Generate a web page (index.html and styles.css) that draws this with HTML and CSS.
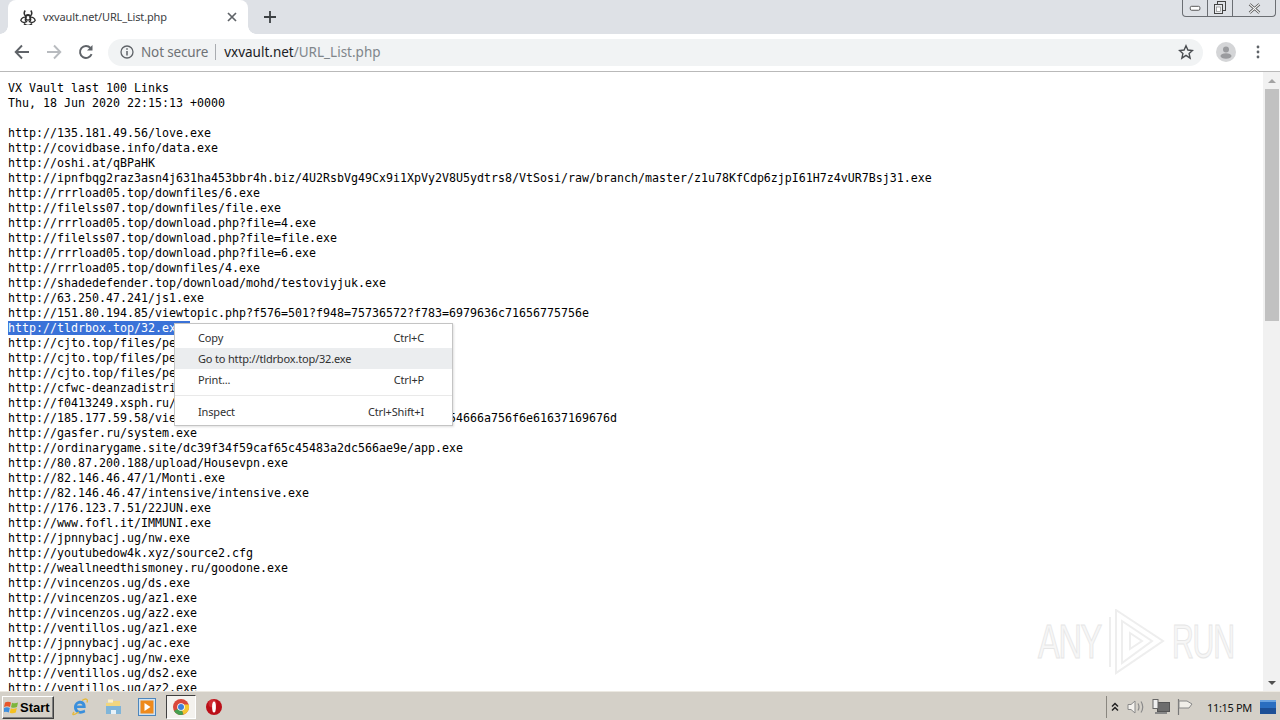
FILE: index.html
```html
<!DOCTYPE html>
<html lang="en">
<head>
<meta charset="utf-8">
<title>vxvault.net/URL_List.php</title>
<link rel="stylesheet" href="styles.css">
</head>
<body>
<div class="desktop">
  <header class="tabstrip">
    <div class="tab">
      <svg class="favicon" viewBox="0 0 16 16" width="16" height="16"><g fill="none" stroke="#2f2f2f"><circle cx="8" cy="8.800" r="2.400" stroke-width="1.300"/><path d="M5.200 1.500a4.200 4.200 0 0 0 .4 5.500 3.400 3.400 0 0 1 4.800 0 4.200 4.200 0 0 0 .4-5.500" stroke-width="1.500"/><path d="M.8 11.500a4.200 4.200 0 0 1 5.200-3.200 3.400 3.400 0 0 0 .6 4.500 4.200 4.200 0 0 1-5.800-1.300z" stroke-width="1.300"/><path d="M15.200 11.500a4.200 4.200 0 0 0-5.200-3.200 3.400 3.400 0 0 1-.6 4.500 4.200 4.200 0 0 0 5.800-1.300z" stroke-width="1.300"/><path d="M4 14.500a5 5 0 0 0 8 0" stroke-width="1.500"/></g></svg>
      <span class="tab-title">vxvault.net/URL_List.php</span>
      <svg class="tab-close" viewBox="0 0 10 10" width="10" height="10"><path d="M1 1l8 8M9 1l-8 8" stroke="#5f6368" stroke-width="1.700"/></svg>
    </div>
    <svg class="newtab" viewBox="0 0 12 12" width="12" height="12"><path d="M6 0v12M0 6h12" stroke="#3c4043" stroke-width="1.800"/></svg>
    <div class="winctrl">
      <span class="winbtn"><svg viewBox="0 0 14 8" width="13" height="7"><rect x="1" y="1.500" width="11" height="4.500" rx="1.500" fill="#fff" stroke="#444"/></svg></span>
      <span class="winbtn"><svg viewBox="0 0 14 14" width="14" height="14"><rect x="4.500" y=".5" width="8" height="9" fill="none" stroke="#444"/><rect x="1.500" y="3.500" width="8" height="9" fill="#e8eaed" stroke="#444"/><rect x="3.500" y="6" width="4" height="4.500" fill="#fff" stroke="#777" stroke-width=".6"/></svg></span>
      <span class="winbtn wide"><svg viewBox="0 0 12 10" width="13" height="11"><path d="M1.500 1l9 8M10.500 1l-9 8" stroke="#555" stroke-width="2.400"/><path d="M1.500 1l9 8M10.500 1l-9 8" stroke="#fff" stroke-width="1"/></svg></span>
    </div>
  </header>

  <nav class="toolbar">
    <svg class="navicon" viewBox="0 0 16 16" width="16" height="16"><path d="M15 8H2M8 1.500L1.700 8 8 14.500" fill="none" stroke="#5f6368" stroke-width="1.900"/></svg>
    <svg class="navicon" viewBox="0 0 16 16" width="16" height="16"><path d="M1 8h13M8 1.500L14.300 8 8 14.500" fill="none" stroke="#b8bbbf" stroke-width="1.900"/></svg>
    <svg class="navicon" viewBox="0 0 16 16" width="16" height="16"><path d="M13.600 10.200A6 6 0 1 1 12.500 4" fill="none" stroke="#5f6368" stroke-width="1.900"/><path d="M14.500 1v5.500H9z" fill="#5f6368"/></svg>
    <div class="omnibox">
      <svg class="info" viewBox="0 0 14 14" width="14" height="14"><circle cx="7" cy="7" r="6" fill="none" stroke="#5f6368" stroke-width="1.300"/><path d="M7 6v4.500M7 3.300v1.500" stroke="#5f6368" stroke-width="1.500"/></svg>
      <span class="notsecure">Not secure</span>
      <span class="omnisep"></span>
      <span class="url"><span class="host">vxvault.net</span>/URL_List.php</span>
      <svg class="star" viewBox="0 0 16 16" width="16" height="16"><path d="M8 1.800l1.900 4.200 4.600.5-3.400 3.100 1 4.500L8 11.300l-4.100 2.800 1-4.500L1.500 6.500l4.600-.5z" fill="none" stroke="#4a4d51" stroke-width="1.400"/></svg>
    </div>
    <svg class="avatar" viewBox="0 0 20 20" width="20" height="20"><circle cx="10" cy="10" r="10" fill="#d4d5d7"/><circle cx="10" cy="7.500" r="3" fill="#9a9b9e"/><ellipse cx="10" cy="14" rx="5.500" ry="2.800" fill="#9a9b9e"/></svg>
    <svg class="kebab" viewBox="0 0 4 14" width="4" height="14"><circle cx="2" cy="2" r="1.400" fill="#5f6368"/><circle cx="2" cy="7" r="1.400" fill="#5f6368"/><circle cx="2" cy="12" r="1.400" fill="#5f6368"/></svg>
  </nav>

  <main class="viewport">
    <pre class="page">VX Vault last 100 Links
Thu, 18 Jun 2020 22:15:13 +0000

http://135.181.49.56/love.exe
http://covidbase.info/data.exe
http://oshi.at/qBPaHK
http://ipnfbqg2raz3asn4j631ha453bbr4h.biz/4U2RsbVg49Cx9i1XpVy2V8U5ydtrs8/VtSosi/raw/branch/master/z1u78KfCdp6zjpI61H7z4vUR7Bsj31.exe
http://rrrload05.top/downfiles/6.exe
http://filelss07.top/downfiles/file.exe
http://rrrload05.top/download.php?file=4.exe
http://filelss07.top/download.php?file=file.exe
http://rrrload05.top/download.php?file=6.exe
http://rrrload05.top/downfiles/4.exe
http://shadedefender.top/download/mohd/testoviyjuk.exe
http://63.250.47.241/js1.exe
http://151.80.194.85/viewtopic.php?f576=501?f948=75736572?f783=6979636c71656775756e
<span class="sel">http://tldrbox.top/32.exe </span>
http://cjto.top/files/pe1.exe
http://cjto.top/files/pe2.exe
http://cjto.top/files/pe3.exe
http://cfwc-deanzadistrict.org/a.exe
http://f0413249.xsph.ru/b.exe
http://185.177.59.58/viewtopic.php?f576=501?f948=75736572?f783=54666a756f6e61637169676d
http://gasfer.ru/system.exe
http://ordinarygame.site/dc39f34f59caf65c45483a2dc566ae9e/app.exe
http://80.87.200.188/upload/Housevpn.exe
http://82.146.46.47/1/Monti.exe
http://82.146.46.47/intensive/intensive.exe
http://176.123.7.51/22JUN.exe
http://www.fofl.it/IMMUNI.exe
http://jpnnybacj.ug/nw.exe
http://youtubedow4k.xyz/source2.cfg
http://weallneedthismoney.ru/goodone.exe
http://vincenzos.ug/ds.exe
http://vincenzos.ug/az1.exe
http://vincenzos.ug/az2.exe
http://ventillos.ug/az1.exe
http://jpnnybacj.ug/ac.exe
http://jpnnybacj.ug/nw.exe
http://ventillos.ug/ds2.exe
http://ventillos.ug/az2.exe</pre>
    <aside class="scrollbar">
      <span class="arrow up"></span>
      <span class="thumb"></span>
      <span class="track"></span>
      <span class="arrow down"></span>
    </aside>

    <div class="menu">
      <div class="menu-item"><span>Copy</span><span>Ctrl+C</span></div>
      <div class="menu-item active"><span>Go to http://tldrbox.top/32.exe</span></div>
      <div class="menu-item"><span>Print...</span><span>Ctrl+P</span></div>
      <div class="menu-sep"></div>
      <div class="menu-item"><span>Inspect</span><span>Ctrl+Shift+I</span></div>
    </div>

    <div class="watermark">
      <span class="wm-text">ANY</span>
      <svg class="wm-logo" viewBox="0 0 60 66" width="60" height="66"><g fill="none" stroke="#eeeeee" stroke-width="2"><path d="M10 1L57 32 10 64z"/><path d="M16 12L46 32 16 54z"/><path d="M4 8v50"/><path d="M24 24l12 8-12 8z"/></g></svg>
      <span class="wm-text wm-run">RUN</span>
    </div>
  </main>

  <footer class="taskbar">
    <div class="start">
      <svg viewBox="0 0 16 16" width="16" height="16"><path d="M1 3.500q3-1.500 6 0l-1 4.500q-3-1.500-6 0z" fill="#e8562a"/><path d="M8 3.700q3 1.300 6-.2l-1 4.500q-3 1.500-6 .2z" fill="#7cb53c"/><path d="M0 9q3-1.500 5.800 0l-1 4.500q-3-1.500-5.800 0z" fill="#3d8ede"/><path d="M6.800 9.200q3 1.300 6-.2l-1 4.500q-3 1.500-6 .2z" fill="#f4c020"/></svg>
      <span>Start</span>
    </div>
    <div class="quick">
      <svg class="qi" viewBox="0 0 18 18" width="18" height="18"><path d="M14.500 10H6c.3 3 4.500 4 7.500 1.500l.8 2.800c-5 3-11.300.8-11.300-5 0-5.500 6-8 9.500-5.500 1.800 1.300 2.200 3.600 2.200 6.200zM6 7.500h5.500C11.300 5 6.500 5 6 7.500z" fill="#3a8fdc"/><path d="M3 14C0 18 3 17 8 14M11 2.500c3-2 6.500-2.500 5 2" fill="none" stroke="#e6b93a" stroke-width="1.300"/></svg>
      <svg class="qi" viewBox="0 0 18 18" width="18" height="18"><path d="M1 5h6l1-2h7v12H1z" fill="#f1d67e"/><path d="M3 1.500h5v3H3z" fill="#fff3c4"/><path d="M1 8h15v8H1z" fill="#7fb5d9"/><path d="M6 16v-4h5v4z" fill="#e8f2f8"/></svg>
      <svg class="qi" viewBox="0 0 18 18" width="18" height="18"><rect x=".5" y=".5" width="17" height="17" fill="#cfe2f2" stroke="#4d86bc"/><rect x="2.500" y="2.500" width="13" height="13" fill="#ee8a1c"/><path d="M6.500 5l6 4-6 4z" fill="#fff"/></svg>
      <span class="task-active">
        <svg viewBox="0 0 18 18" width="18" height="18"><circle cx="9" cy="9" r="8" fill="#d9473a"/><path d="M9 9L2 13a8 8 0 0 0 9.500 3.600z" fill="#46a04f"/><path d="M9 9l2.500 7.600A8 8 0 0 0 16.700 6.500H9z" fill="#f5c62f"/><circle cx="9" cy="9" r="3.800" fill="#fff"/><circle cx="9" cy="9" r="3" fill="#3f7fd9"/></svg>
      </span>
      <svg class="qi" viewBox="0 0 18 18" width="18" height="18"><circle cx="9" cy="9" r="8" fill="#bb0f18"/><circle cx="7.500" cy="5.500" r="4" fill="#e4474b" opacity=".5"/><ellipse cx="9" cy="9" rx="1.900" ry="5.500" fill="#fff"/></svg>
    </div>
    <div class="tray">
      <svg class="tr-chev" viewBox="0 0 8 10" width="8" height="10"><path d="M1 4.500L4 1.500 7 4.500M1 8.500L4 5.500 7 8.500" fill="none" stroke="#222" stroke-width="1.500"/></svg>
      <svg class="tr-sound" viewBox="0 0 18 16" width="18" height="16"><path d="M1 5.500h3L8 2v12l-4-3.500H1z" fill="#f4f2ee" stroke="#8a8a8a"/><path d="M11 4.500q2 3.500 0 7M14 2.500q3.500 5.500 0 11" fill="none" stroke="#8a8a8a" stroke-width="1.200"/></svg>
      <svg class="tr-net" viewBox="0 0 18 16" width="18" height="16"><rect x="5.500" y="3.500" width="12" height="9" fill="#6d6d6d" stroke="#555"/><rect x="1" y=".5" width="5" height="9" fill="#f0f0f0" stroke="#666"/><path d="M3 13h12v2H3z" fill="#888"/></svg>
      <svg class="tr-flag" viewBox="0 0 18 16" width="18" height="16"><path d="M2.500 0v16" stroke="#777" stroke-width="1.200"/><path d="M3 2h8l5 3-3 4H3z" fill="#f0eee8" stroke="#888"/></svg>
      <span class="clock">11:15 PM</span>
      <svg class="tr-desk" viewBox="0 0 16 14" width="16" height="14"><rect width="16" height="14" fill="#2a6ec0"/><path d="M0 8h16v6H0z" fill="#1c4f96"/><path d="M0 0h16v2H0z" fill="#6aa3e0"/></svg>
    </div>
  </footer>
</div>
</body>
</html>
```

FILE: styles.css
```css
* { box-sizing: border-box; }
html, body { margin: 0; padding: 0; }
body { width: 1280px; height: 720px; overflow: hidden; background: #fff; }

.desktop {
  width: 1280px;
  height: 720px;
  display: flex;
  flex-direction: column;
  font-family: "Noto Sans", "Open Sans", sans-serif;
}

/* tab strip */
.tabstrip {
  height: 34px;
  flex: none;
  display: flex;
  align-items: flex-start;
  padding-left: 8px;
  background: #dee1e6;
}
.tab {
  position: relative;
  width: 240px;
  height: 34px;
  display: flex;
  align-items: center;
  padding: 0 10px 0 12px;
  background: #fff;
  border-radius: 8px 8px 0 0;
}
.tab::before, .tab::after {
  content: "";
  position: absolute;
  bottom: 0;
  width: 8px;
  height: 8px;
}
.tab::before { left: -8px; background: radial-gradient(circle at 0 0, #dee1e6 7.500px, #fff 8px); }
.tab::after { right: -8px; background: radial-gradient(circle at 100% 0, #dee1e6 7.500px, #fff 8px); }
.favicon { flex: none; margin-right: 7px; }
.tab-title {
  flex: 1;
  margin-bottom: 2px;
  font-size: 11px;
  letter-spacing: -.15px;
  color: #3c4043;
}
.tab-close { flex: none; margin-right: 1px; }
.newtab { flex: none; margin: 11px 0 0 16px; }

.winctrl {
  margin-left: auto;
  margin-right: 4px;
  height: 17px;
  display: flex;
  border: 1px solid #6b6e73;
  border-top: 0;
  border-radius: 0 0 4px 4px;
}
.winbtn {
  width: 25px;
  display: flex;
  align-items: center;
  justify-content: center;
  border-right: 1px solid #6b6e73;
}
.winbtn.wide { width: 42px; border-right: 0; }

/* toolbar */
.toolbar {
  height: 38px;
  flex: none;
  display: flex;
  align-items: center;
  padding: 0 14px 1px 14px;
  background: #fff;
  border-bottom: 1px solid #b9b9b9;
}
.navicon { flex: none; margin-right: 16px; }
.navicon:nth-child(3) { margin-right: 14px; }
.omnibox {
  width: 1095px;
  height: 27px;
  flex: none;
  display: flex;
  align-items: center;
  padding: 0 9px 0 12px;
  border-radius: 14px;
  background: #f1f3f4;
  color: #70757a;
}
.info { flex: none; margin-right: 7px; }
.notsecure { font-size: 13.500px; letter-spacing: -.15px; color: #6f7276; white-space: nowrap; }
.omnisep { width: 1px; height: 16px; margin: 0 8px 0 7px; background: #a9acb0; }
.url { flex: 1; font-size: 13.500px; white-space: nowrap; color: #80868b; }
.host { color: #202124; }
.star { flex: none; }
.avatar { flex: none; margin-left: 13px; }
.kebab { flex: none; margin-left: 20px; }

/* page */
.viewport {
  position: relative;
  flex: 1;
  min-height: 0;
  display: flex;
  background: #fff;
  overflow: hidden;
}
.page {
  flex: 1;
  margin: 0;
  padding: 9px 8px 0;
  overflow: hidden;
  font-family: "DejaVu Sans Mono", "Liberation Mono", monospace;
  font-size: 11.630px;
  line-height: 15px;
  color: #000;
}
.sel { background: #3a72d8; color: #fff; }

.scrollbar {
  width: 17px;
  flex: none;
  display: flex;
  flex-direction: column;
  background: #f1f1f1;
}
.arrow { height: 17px; flex: none; display: flex; justify-content: center; align-items: center; }
.arrow::before {
  content: "";
  border-left: 4px solid transparent;
  border-right: 4px solid transparent;
}
.arrow.up::before { border-bottom: 4px solid #a3a3a3; }
.arrow.down::before { border-top: 4px solid #505050; }
.thumb { height: 232px; flex: none; margin: 0 1px 0 2px; background: #c1c1c1; }
.track { flex: 1; }

/* context menu */
.menu {
  position: absolute;
  left: 174px;
  top: 251px;
  width: 279px;
  padding: 3px 0;
  background: #fff;
  border: 1px solid #c4c4c4;
  box-shadow: 1px 1px 2px rgba(0, 0, 0, .12);
  font-size: 11px;
  letter-spacing: -.17px;
  color: #303030;
}
.menu-item {
  height: 21px;
  display: flex;
  align-items: center;
  justify-content: space-between;
  padding: 0 28px 0 23px;
}
.menu-item.active { background: #ebedef; }
.menu-sep { height: 1px; margin: 5px 0; background: #e9e9e9; }

/* watermark */
.watermark {
  position: absolute;
  left: 1038px;
  top: 537px;
  display: flex;
  align-items: center;
  gap: 6px;
  pointer-events: none;
}
.wm-text {
  width: 62px;
  font-family: "Liberation Sans", sans-serif;
  font-size: 48px;
  line-height: 66px;
  letter-spacing: -2px;
  color: #f6f6f6;
  -webkit-text-stroke: 1px #e6e6e6;
  transform: scaleX(.68);
  transform-origin: 0 50%;
  white-space: nowrap;
}
.wm-run { transform: scaleX(.63); }
.wm-logo { flex: none; }

/* taskbar */
.taskbar {
  height: 29px;
  flex: none;
  display: flex;
  align-items: center;
  padding: 2px 4px 0 2px;
  background: #d4d0c8;
  border-top: 1px solid #ece9e2;
}
.start {
  width: 52px;
  height: 23px;
  flex: none;
  display: flex;
  align-items: center;
  padding-left: 1px;
  background: #d4d0c8;
  border: 1px solid;
  border-color: #fff #404040 #404040 #fff;
  box-shadow: inset -1px -1px 0 #808080;
  font-family: "Liberation Sans", sans-serif;
  font-size: 13px;
  font-weight: 700;
  color: #000;
}
.quick { display: flex; align-items: center; margin-left: 17px; }
.qi { flex: none; margin-right: 15.500px; }
.task-active {
  width: 30px;
  height: 24px;
  display: flex;
  align-items: center;
  justify-content: center;
  margin-left: -5.500px;
  margin-right: 9px;
  background: #f4f2ee;
  border: 1px solid;
  border-color: #404040 #fff #fff #404040;
}
.tray {
  margin-left: auto;
  height: 22px;
  width: 170px;
  display: flex;
  align-items: center;
  padding-left: 4px;
  border-left: 1px solid #8a8780;
}
.tr-chev { flex: none; margin-right: 8px; }
.tr-sound { flex: none; margin-right: 7px; }
.tr-net { flex: none; margin-right: 6px; }
.tr-flag { flex: none; margin-right: 13px; }
.clock { flex: none; font-size: 11px; letter-spacing: -.35px; color: #111; white-space: nowrap; margin-right: 8px; }
.tr-desk { flex: none; }
```
